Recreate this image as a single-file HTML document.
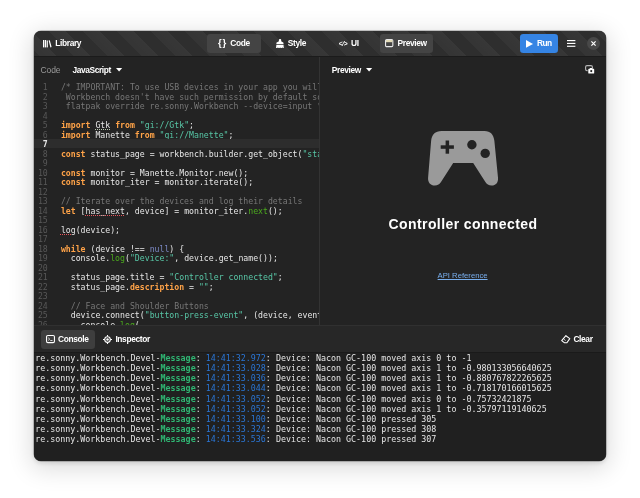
<!DOCTYPE html>
<html><head><meta charset="utf-8">
<style>
*{box-sizing:border-box;margin:0;padding:0}
html,body{width:640px;height:498px;overflow:hidden;background:#fff}
body{font-family:"Liberation Sans",sans-serif;position:relative}
#win{will-change:transform;position:absolute;left:34px;top:31px;width:572px;height:429.5px;border-radius:7px;background:#232323;overflow:hidden;
 box-shadow:0 0 0 .5px rgba(0,0,0,.4),0 2px 5px rgba(0,0,0,.13),0 5px 24px 3px rgba(0,0,0,.14)}
.abs{position:absolute}
#hdr{left:0;top:0;width:572px;height:25.5px;background-color:#2e2e2e;
 background-image:repeating-linear-gradient(45deg,rgba(255,255,255,0) 0,rgba(255,255,255,0) 3.6px,rgba(255,255,255,.03) 3.6px,rgba(255,255,255,.042) 15.7px,rgba(255,255,255,0) 15.7px,rgba(255,255,255,0) 24.16px);
 border-bottom:1px solid #1b1b1b}
.t{position:absolute;white-space:nowrap;color:#fff;font-weight:bold;font-size:8.4px;line-height:10px;letter-spacing:-.36px;margin-top:-.3px}
.btn{position:absolute;border-radius:3.3px;background:#444}
svg{position:absolute;overflow:visible}
.mono{font-family:"DejaVu Sans Mono","Liberation Mono",monospace}
#code{left:0;top:50px;width:285.3px;height:245.2px;overflow:hidden;background:#232323}
#code .ln{position:absolute;left:0;width:285.5px;height:9.52px;white-space:pre;font-size:8.2px;line-height:9.52px;color:#e6e6e6}
#code .ln i{position:absolute;left:0;width:13.8px;text-align:right;font-style:normal;color:#585858}
#code .ln b{position:absolute;left:26.9px;font-weight:normal}
.k{color:#ffa348;font-weight:bold}
.s{color:#58c6a6}
.c{color:#777}
.f{color:#4caa1e}
.n{color:#7d8ac7}
.u{text-decoration:underline dotted #b8c8b0 .8px;text-underline-offset:1px}
.e{text-decoration:underline dotted #e8555c .8px;text-underline-offset:1px}
#con{left:0;top:321px;width:572px;height:109px;background:#202020;overflow:hidden;border-top:.6px solid #1a1a1a}
#con div{position:absolute;left:1.2px;white-space:pre;font-size:8.33px;line-height:10.08px;height:10.08px;color:#e6e6e6}
.g{color:#2fb673;font-weight:bold}
.bl{color:#2a75d4}
</style></head><body>
<div id="win">
 <!-- header -->
 <div id="hdr" class="abs"></div>
 <svg style="left:8.8px;top:8.9px" width="8.6" height="7.5" viewBox="0 0 8.6 7.5"><g fill="#fff"><rect x="0" y="0" width="1.3" height="7.4"/><rect x="1.85" y="0" width="1.25" height="7.4"/><rect x="3.65" y=".5" width="1.2" height="6.9"/><path d="M5.6 .5 L6.8 .15 L8.6 7 L7.4 7.4Z"/></g></svg>
 <div class="t" style="left:21.3px;top:7.6px">Library</div>

 <div class="btn" style="left:173px;top:3px;width:54px;height:18.8px"></div>
 <div class="t" style="left:184.1px;top:7.2px;font-size:9.6px;letter-spacing:.55px;line-height:10px">{}</div>
 <div class="t" style="left:196.3px;top:7.6px">Code</div>

 <svg style="left:241.7px;top:8px" width="7.8" height="9.1" viewBox="0 0 7.8 9.1"><g fill="#fff"><rect x="2.9" y="0" width="2.3" height="3.4" rx=".9"/><path d="M3 2.2 L.7 3.5 Q.4 3.7 .4 4 V5.1 H7.5 V4 Q7.5 3.7 7.2 3.5 L5.1 2.2Z"/><path d="M.4 5.75 H7.5 L7.8 9.1 H6.6 L6.3 7.9 L5.9 9.1 H4.4 L4.1 7.9 L3.7 9.1 H2.3 L2 8.1 L1.5 9.1 H0Z"/></g></svg>
 <div class="t" style="left:253.8px;top:7.6px">Style</div>

 <div class="t" style="left:304.8px;top:9.3px;font-family:'Liberation Mono',monospace;font-size:6.6px;letter-spacing:-1.5px;line-height:10px">&lt;/&gt;</div>
 <div class="t" style="left:317px;top:7.6px">UI</div>

 <div class="btn" style="left:345.5px;top:3px;width:53.6px;height:18.8px"></div>
 <svg style="left:351.2px;top:8.3px" width="8.4" height="8.2" viewBox="0 0 8.4 8.2"><rect x=".55" y=".55" width="7.3" height="7.1" rx="1.2" fill="none" stroke="#e8e8e8" stroke-width="1.1"/><rect x="1" y="1" width="6.4" height="2.2" fill="#e4dcb8"/></svg>
 <div class="t" style="left:363.5px;top:7.6px">Preview</div>

 <div class="btn" style="left:485.6px;top:3px;width:38.6px;height:19px;background:#3584e4"></div>
 <svg style="left:492px;top:8.7px" width="7" height="7.8" viewBox="0 0 7 7.8"><path d="M0 0 L7 3.9 L0 7.8Z" fill="#fff"/></svg>
 <div class="t" style="left:503.1px;top:7.6px;letter-spacing:-.6px">Run</div>

 <svg style="left:532.8px;top:9.1px" width="8.4" height="7" viewBox="0 0 8.4 7"><g fill="#fff"><rect x="0" y="0" width="8.4" height="1.15"/><rect x="0" y="2.85" width="8.4" height="1.15"/><rect x="0" y="5.7" width="8.4" height="1.15"/></g></svg>

 <div class="abs" style="left:552.7px;top:6px;width:13.2px;height:13.2px;border-radius:50%;background:#484848"></div>
 <svg style="left:556.8px;top:10.1px" width="5" height="5" viewBox="0 0 5 5"><path d="M.4 .4 L4.6 4.6 M4.6 .4 L.4 4.6" stroke="#fff" stroke-width="1.2" fill="none"/></svg>

 <!-- toolbar row -->
 <div class="abs" style="left:285.3px;top:26px;width:1px;height:269px;background:#333"></div>
 <div class="t" style="left:6.6px;top:33.8px;font-weight:normal;color:#9a9a9a;font-size:8.5px;letter-spacing:-.12px">Code</div>
 <div class="t" style="left:38.6px;top:33.8px;letter-spacing:-.42px">JavaScript</div>
 <svg style="left:81.8px;top:36.8px" width="6.2" height="3.5" viewBox="0 0 6.2 3.5"><path d="M0 0 H6.2 L3.1 3.5Z" fill="#fff"/></svg>
 <div class="t" style="left:297.8px;top:33.8px">Preview</div>
 <svg style="left:332.2px;top:36.8px" width="6.2" height="3.5" viewBox="0 0 6.2 3.5"><path d="M0 0 H6.2 L3.1 3.5Z" fill="#fff"/></svg>
 <svg style="left:551px;top:34px" width="9.4" height="8.6" viewBox="0 0 9.4 8.6"><path d="M2.6 5.6 H2 Q.6 5.6 .6 4.2 V2 Q.6 .6 2 .6 H6 Q7.4 .6 7.4 2 V3" fill="none" stroke="#b4b4b4" stroke-width="1.15"/><path d="M3.3 4.4 Q3.3 3.7 4 3.7 H4.6 L5 3.1 H7.4 L7.8 3.7 H8.5 Q9.2 3.7 9.2 4.4 V7.9 Q9.2 8.6 8.5 8.6 H4 Q3.3 8.6 3.3 7.9Z" fill="#fff"/><circle cx="6.25" cy="6.1" r="1.1" fill="#232323"/></svg>

 <!-- code -->
 <div id="code" class="abs mono">
  <div class="ln" style="top:2.00px"><i>1</i><b><span class="c">/* IMPORTANT: To use USB devices in your app you will need to grant access.</span></b></div>
  <div class="ln" style="top:11.52px"><i>2</i><b><span class="c"> Workbench doesn't have such permission by default so you need to run</span></b></div>
  <div class="ln" style="top:21.04px"><i>3</i><b><span class="c"> flatpak override re.sonny.Workbench --device=input */</span></b></div>
  <div class="ln" style="top:30.56px"><i>4</i><b></b></div>
  <div class="ln" style="top:40.08px"><i>5</i><b><span class="k">import</span> <span class="u">Gtk</span> <span class="k">from</span> <span class="s">"gi://Gtk"</span>;</b></div>
  <div class="ln" style="top:49.60px"><i>6</i><b><span class="k">import</span> Manette <span class="k">from</span> <span class="s">"gi://Manette"</span>;</b></div>
  <div class="ln" style="top:59.12px"><u style="position:absolute;left:0;top:-1.1px;width:100%;height:9.2px;background:#2d2d2d;text-decoration:none"></u><i style="color:#e6e6e6;font-weight:bold">7</i><b></b></div>
  <div class="ln" style="top:68.64px"><i>8</i><b><span class="k">const</span> status_page = workbench.builder.get_object(<span class="s">"status_page"</span>);</b></div>
  <div class="ln" style="top:78.16px"><i>9</i><b></b></div>
  <div class="ln" style="top:87.68px"><i>10</i><b><span class="k">const</span> monitor = Manette.Monitor.new();</b></div>
  <div class="ln" style="top:97.20px"><i>11</i><b><span class="k">const</span> monitor_iter = monitor.iterate();</b></div>
  <div class="ln" style="top:106.72px"><i>12</i><b></b></div>
  <div class="ln" style="top:116.24px"><i>13</i><b><span class="c">// Iterate over the devices and log their details</span></b></div>
  <div class="ln" style="top:125.76px"><i>14</i><b><span class="k">let</span> [<span class="e">has_next</span>, device] = monitor_iter.<span class="f">next</span>();</b></div>
  <div class="ln" style="top:135.28px"><i>15</i><b></b></div>
  <div class="ln" style="top:144.80px"><i>16</i><b><span class="e">log</span>(device);</b></div>
  <div class="ln" style="top:154.32px"><i>17</i><b></b></div>
  <div class="ln" style="top:163.84px"><i>18</i><b><span class="k">while</span> (device !== <span class="n">null</span>) {</b></div>
  <div class="ln" style="top:173.36px"><i>19</i><b>  console.<span class="f">log</span>(<span class="s">"Device:"</span>, device.get_name());</b></div>
  <div class="ln" style="top:182.88px"><i>20</i><b></b></div>
  <div class="ln" style="top:192.40px"><i>21</i><b>  status_page.title = <span class="s">"Controller connected"</span>;</b></div>
  <div class="ln" style="top:201.92px"><i>22</i><b>  status_page.<span class="k">description</span> = <span class="s">""</span>;</b></div>
  <div class="ln" style="top:211.44px"><i>23</i><b></b></div>
  <div class="ln" style="top:220.96px"><i>24</i><b>  <span class="c">// Face and Shoulder Buttons</span></b></div>
  <div class="ln" style="top:230.48px"><i>25</i><b>  device.connect(<span class="s">"button-press-event"</span>, (device, event, button) =&gt; {</b></div>
  <div class="ln" style="top:240.00px"><i>26</i><b>    console.<span class="f">log</span>(</b></div>
 </div>

 <!-- preview -->
 <svg style="left:393.5px;top:100px" width="70.2" height="54.6" viewBox="0 0 70.2 54.6"><path fill="#9a9a9a" d="M13.5 0 H56.6 C62.4 0 65.7 3.6 66.4 10 L70 46.5 C70.6 51.5 67.8 54.6 63.6 54.6 C60.6 54.6 58.8 53.2 57.4 51 L45.2 32.1 H25.2 L13 51 C11.6 53.2 9.8 54.6 6.8 54.6 C2.6 54.6 -.4 51.5 .1 46.5 L3.1 10 C3.8 3.6 7.2 0 13.5 0Z"/><g fill="#232323"><rect x="12.7" y="14.3" width="13.2" height="3.5"/><rect x="17.6" y="9.5" width="3.5" height="13.2"/><circle cx="43.9" cy="13.8" r="4.7"/><circle cx="57.2" cy="22.4" r="4.7"/></g></svg>
 <div class="t" style="left:286px;top:184.3px;width:286px;text-align:center;font-size:14px;line-height:18px;letter-spacing:.4px">Controller connected</div>
 <div class="t" style="left:285.6px;top:240.6px;width:286px;text-align:center;font-weight:normal;font-size:7.7px;letter-spacing:0;color:#78aeed;"><span style="text-decoration:underline;text-decoration-thickness:.6px;text-underline-offset:1px">API Reference</span></div>

 <!-- bottom toolbar -->
 <div class="abs" style="left:0;top:294.4px;width:572px;height:26.8px;background:#272727;border-top:1px solid #303030"></div>
 <div class="btn" style="left:7px;top:299px;width:54px;height:18.6px;background:#3e3e3e"></div>
 <svg style="left:11.6px;top:304.2px" width="9" height="8.2" viewBox="0 0 9 8.2"><rect x=".55" y=".55" width="7.9" height="7.1" rx="1.3" fill="none" stroke="#fff" stroke-width="1.1"/><path d="M2.2 2.8 L3.7 4.1 L2.2 5.4" fill="none" stroke="#fff" stroke-width=".8"/><rect x="4.3" y="5.2" width="2.2" height=".8" fill="#fff"/></svg>
 <div class="t" style="left:24px;top:303.4px">Console</div>
 <svg style="left:69px;top:303.8px" width="9" height="9" viewBox="0 0 9 9"><circle cx="4.5" cy="4.5" r="2.8" fill="none" stroke="#fff" stroke-width="1.15"/><circle cx="4.5" cy="4.5" r="1.25" fill="#fff"/><path d="M4.5 0 V1.6 M4.5 7.4 V9 M0 4.5 H1.6 M7.4 4.5 H9" stroke="#fff" stroke-width="1.1"/></svg>
 <div class="t" style="left:81.4px;top:303.4px">Inspector</div>
 <svg style="left:526.8px;top:304.2px" width="9.4" height="8.6" viewBox="0 0 9.4 8.6"><path d="M4.9 .7 L8.8 3.6 L5.9 7.7 H3.3 L.7 5.6 Z" fill="none" stroke="#fff" stroke-width="1.1" stroke-linejoin="round"/><path d="M2.9 4.2 L4.6 5.6" fill="none" stroke="#fff" stroke-width=".8"/></svg>
 <div class="t" style="left:539.4px;top:303.4px">Clear</div>

 <!-- console -->
 <div id="con" class="abs mono">
  <div style="top:0.20px">re.sonny.Workbench.Devel-<span class="g">Message</span>: <span class="bl">14:41:32.972</span>: Device: Nacon GC-100 moved axis 0 to -1</div>
  <div style="top:10.28px">re.sonny.Workbench.Devel-<span class="g">Message</span>: <span class="bl">14:41:33.028</span>: Device: Nacon GC-100 moved axis 1 to -0.980133056640625</div>
  <div style="top:20.36px">re.sonny.Workbench.Devel-<span class="g">Message</span>: <span class="bl">14:41:33.036</span>: Device: Nacon GC-100 moved axis 1 to -0.880767822265625</div>
  <div style="top:30.44px">re.sonny.Workbench.Devel-<span class="g">Message</span>: <span class="bl">14:41:33.044</span>: Device: Nacon GC-100 moved axis 1 to -0.718170166015625</div>
  <div style="top:40.52px">re.sonny.Workbench.Devel-<span class="g">Message</span>: <span class="bl">14:41:33.052</span>: Device: Nacon GC-100 moved axis 0 to -0.75732421875</div>
  <div style="top:50.60px">re.sonny.Workbench.Devel-<span class="g">Message</span>: <span class="bl">14:41:33.052</span>: Device: Nacon GC-100 moved axis 1 to -0.35797119140625</div>
  <div style="top:60.68px">re.sonny.Workbench.Devel-<span class="g">Message</span>: <span class="bl">14:41:33.100</span>: Device: Nacon GC-100 pressed 305</div>
  <div style="top:70.76px">re.sonny.Workbench.Devel-<span class="g">Message</span>: <span class="bl">14:41:33.324</span>: Device: Nacon GC-100 pressed 308</div>
  <div style="top:80.84px">re.sonny.Workbench.Devel-<span class="g">Message</span>: <span class="bl">14:41:33.536</span>: Device: Nacon GC-100 pressed 307</div>
 </div>
</div>
</body></html>
